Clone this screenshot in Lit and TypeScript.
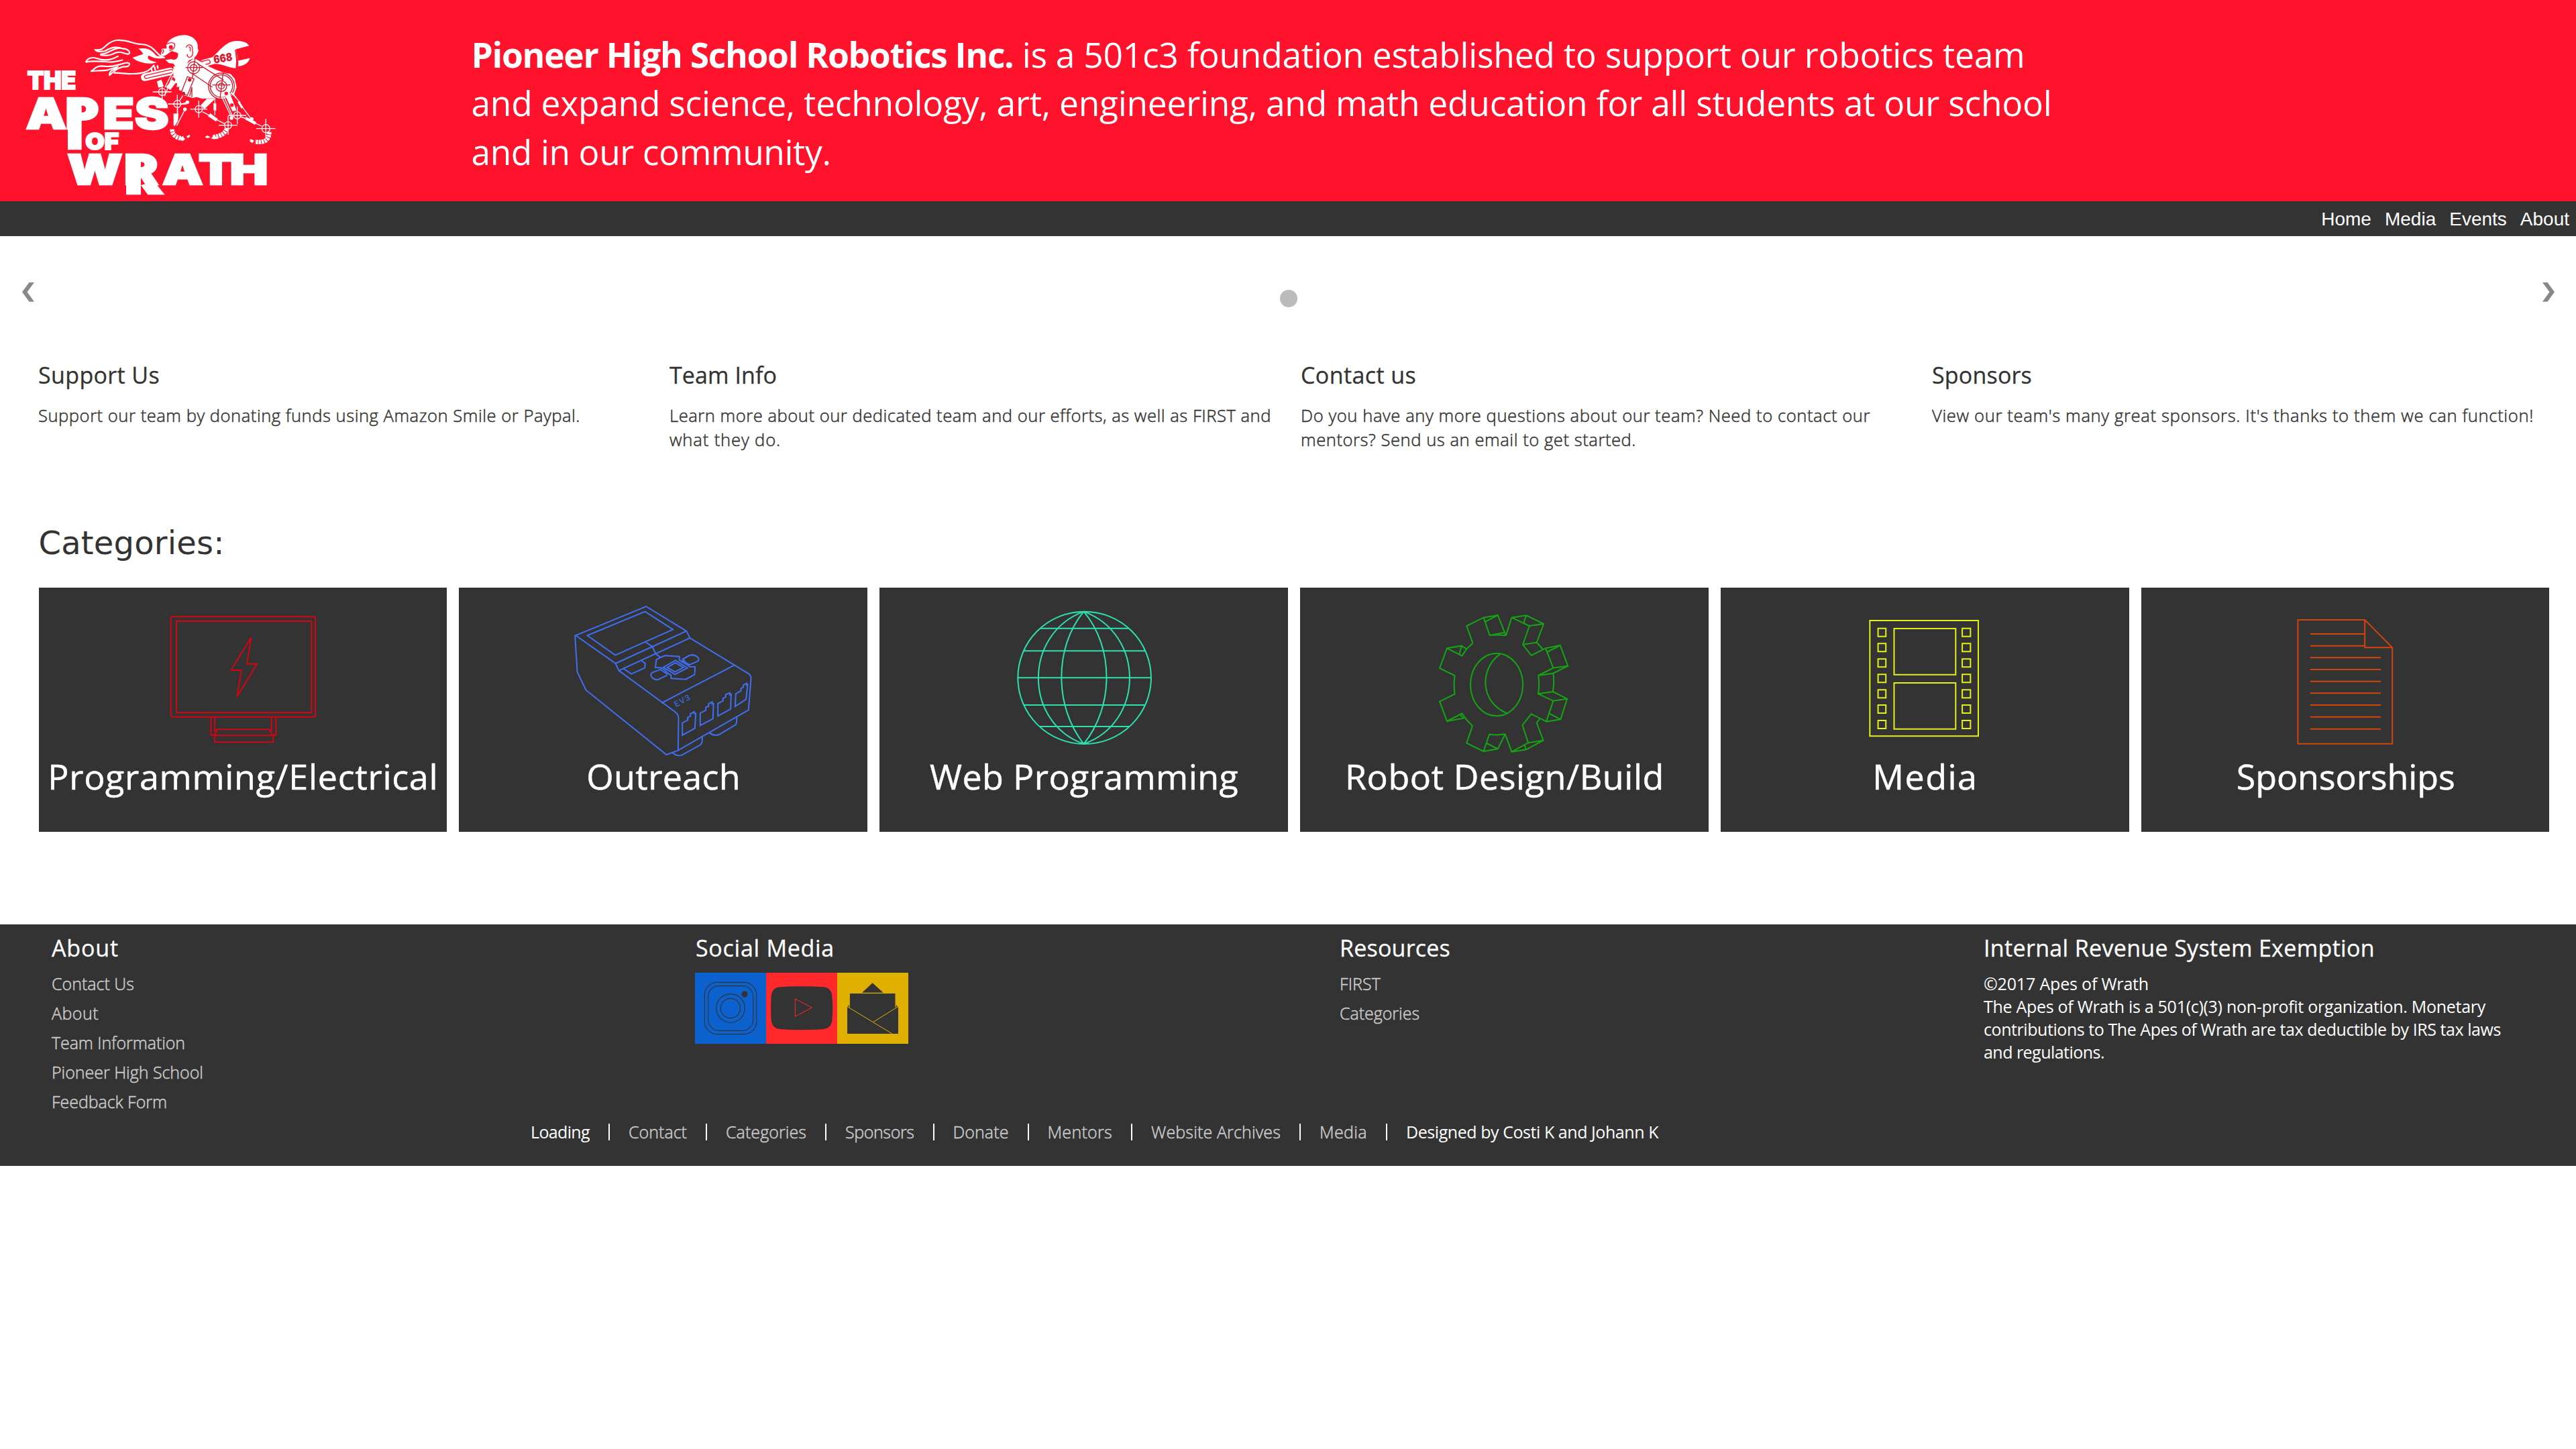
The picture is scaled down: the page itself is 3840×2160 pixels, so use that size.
import { LitElement, html, css, svg } from "lit";
import { customElement, property } from "lit/decorators.js";

/** One line of text whose tracking is adjusted to span the given width. */
@customElement("fit-text")
class FitText extends LitElement {
  @property({ type: Number }) w = 0;
  @property() text = "";

  static styles = css`
    :host { display: block; white-space: pre; }
    .run { display: inline-block; }
  `;

  render() {
    return html`<span class="run">${this.text}</span>`;
  }

  updated() {
    const run = this.renderRoot.querySelector(".run") as HTMLElement;
    this.style.width = `${this.w}px`;
    run.style.letterSpacing = "0";
    const natural = run.getBoundingClientRect().width;
    run.style.letterSpacing = `${(this.w - natural) / this.text.length}px`;
  }
}

type Line = [string, number];

const fit = ([text, w]: Line) => html`<fit-text .text=${text} .w=${w}></fit-text>`;

const features: { title: Line; lines: Line[] }[] = [
  { title: ["Support Us", 181], lines: [["Support our team by donating funds using Amazon Smile or Paypal.", 808]] },
  {
    title: ["Team Info", 160],
    lines: [["Learn more about our dedicated team and our efforts, as well as FIRST and", 897], ["what they do.", 166]],
  },
  {
    title: ["Contact us", 172],
    lines: [["Do you have any more questions about our team? Need to contact our", 849], ["mentors? Send us an email to get started.", 500]],
  },
  { title: ["Sponsors", 149], lines: [["View our team's many great sponsors. It's thanks to them we can function!", 897]] },
];

const monitorIcon = svg`
  <g class="line" stroke="#d40511" transform="translate(200 880) scale(.33333)">
    <rect x="163" y="118" width="646" height="448" rx="9"/>
    <rect x="188" y="138" width="604" height="409"/>
    <path d="M522 210 L432 357 H478 L459 476 L548 329 H503 Z"/>
    <path d="M342 567 V647 H359 M359 567 V628 H365 M613 567 V628 H606 M633 567 V647 H620"/>
    <path d="M359 649 L369 622 H601 L620 649 M359 649 H621 V679 H359 Z"/>
  </g>`;

const brickIcon = svg`
  <g class="line" stroke="#3f6ff0" transform="translate(840 880) scale(.33333)">
    <path d="M368 72 L548 182 L564 213 L828 374 Q838 382 837 395 L826 535 L511 716 L459 735 L99 446 L60 365 L50 203 Z"/>
    <path d="M52 201 L231 327 L246 359 L500 545 Q513 556 513 574 L511 716"/>
    <path d="M363 95 L488 175 L230 290 L105 202 Z"/>
    <path d="M231 327 L548 182 M246 359 L564 213 M437 504 L762 335"/>
    <path d="M364 231 L396 252 L411 284 L432 300"/>
    <path d="M348 315 L364 327 L362 347 L302 374 L268 351"/>
    <path d="M432 300 L453 292 L517 296 L516 311 L529 320 L541 311 M432 300 L414 310 L409 346 H434 L452 357 M529 309 L562 291 C585 284 615 302 598 318 L562 333 L529 312 M554 334 L562 341 L587 342 L585 377 L545 398 L480 394 L479 379 L463 370"/>
    <path d="M463 379 L425 398 C400 405 378 379 396 367 L432 354 L463 375"/>
    <path d="M499 313 L553 347 L497 376 L445 344 Z M499 324 L535 345 L497 365 L463 345 Z M529 320 L554 334 M452 357 L463 370"/>
    <path d="M530 648 V592 L554 581 V568 L566 563 V552 L583 543 V551 L590 550 L586 617 Z"/>
    <path d="M610 604 V549 L635 536 V523 L647 519 V508 L663 499 V508 L669 506 L667 574 Z"/>
    <path d="M689 562 V506 L712 494 V483 L724 477 V466 L742 458 V467 L748 465 L746 531 Z"/>
    <path d="M766 519 L769 462 L792 450 V439 L803 433 V423 L818 415 V423 L822 422 L815 487 Z"/>
    <path d="M486 726 Q505 744 528 737 L612 690 Q620 683 619 655 M651 637 Q672 653 694 645 L768 601 Q774 595 773 567"/>
    <text class="brick-name" transform="translate(502 523) rotate(-29)" fill="#3f6ff0" stroke="none" textLength="76">EV3</text>
  </g>`;

const globeIcon = svg`
  <g class="line" stroke="#2de0ae" transform="translate(1480 880) scale(.57398 .33333)">
    <ellipse cx="237" cy="391" rx="173" ry="296"/>
    <path d="M122 170 H352 M80 271 H394 M64 391 H410 M80 513 H394 M120 609 H353"/>
    <path d="M235 95 C78 195 78 590 235 687 C394 590 394 195 235 95 C158 255 158 520 235 687 C314 520 314 255 235 95"/>
  </g>`;

const gearIcon = svg`
  <g class="line" stroke="#14a514" transform="translate(1480 880) scale(.57398 .33333)">
    <ellipse cx="1309" cy="422" rx="68" ry="140"/>
    <path d="M1317 286 C1265 350 1265 500 1335 549"/>
    <path d="M1247 236 L1231 159 L1275 122 L1312 111 L1333 202 M1275 122 L1291 201 Q1312 197 1333 202 M1291 201 L1330 189 M1312 111 L1280 140"/>
    <path d="M1333 202 L1348 122 L1386 112 L1431 150 L1413 233 L1430 265 M1348 122 L1394 159 L1377 243 L1399 291 L1436 259 L1474 246 L1494 338 L1456 371 M1394 159 L1431 150 M1386 112 L1379 146 M1377 243 L1413 233"/>
    <path d="M1436 259 L1456 347 L1494 338 M1474 246 L1440 276 M1456 347 L1417 381 L1456 371 Q1459 412 1455 453 L1417 463 Q1421 420 1417 381"/>
    <path d="M1417 463 L1456 494 L1438 587 L1399 553 L1376 603 L1391 682 L1348 722 L1331 643 M1455 453 L1492 485 L1475 577 L1438 587 M1456 494 L1492 485 M1475 577 L1445 550"/>
    <path d="M1421 575 L1413 592 L1430 671 L1391 682 M1430 671 L1386 712 L1348 722 M1386 712 L1381 692"/>
    <path d="M1331 643 Q1311 649 1290 644 L1275 720 L1231 683 L1246 607 Q1231 582 1219 551 L1180 585 L1161 497 L1200 464 Q1197 420 1200 381 L1161 348 L1180 259 L1219 293 L1231 262 L1247 236"/>
    <path d="M1331 643 L1312 709 L1275 720 M1312 709 L1283 684 M1180 585 L1223 572 L1214 556 M1180 259 L1218 248 L1231 262 M1218 248 L1212 286"/>
  </g>`;

const holes = [199, 267, 336, 405, 474, 542, 611];
const filmIcon = svg`
  <g class="line" stroke="#e4f01b" transform="translate(2700 870) scale(.61224 .33333)">
    <rect x="143" y="165" width="264" height="517"/>
    <rect x="202" y="201" width="150" height="206"/>
    <rect x="202" y="444" width="150" height="206"/>
    ${holes.map((y) => svg`<rect x="163" y=${y + 1} width="19" height="36"/><rect x="368" y=${y + 1} width="20" height="36"/>`)}
  </g>`;

const rules = [331, 384, 437, 490, 543, 596, 650];
const paperIcon = svg`
  <g class="line" stroke="#d1440c" transform="translate(2700 870) scale(.61224 .33333)">
    <path d="M1185 162 H1348 L1415 286 V716 H1185 Z M1348 162 V286 H1415"/>
    <path d="M1215 225 H1347 M1215 278 H1347"/>
    ${rules.map((y) => svg`<path d="M1215 ${y} H1387"/>`)}
  </g>`;

const cards: { label: Line; icon: unknown; x: number }[] = [
  { label: ["Programming/Electrical", 582], icon: monitorIcon, x: 57.6 },
  { label: ["Outreach", 230], icon: brickIcon, x: 684.5 },
  { label: ["Web Programming", 460], icon: globeIcon, x: 1311.4 },
  { label: ["Robot Design/Build", 476], icon: gearIcon, x: 1938.3 },
  { label: ["Media", 157], icon: filmIcon, x: 2565.2 },
  { label: ["Sponsorships", 326], icon: paperIcon, x: 3192.1 },
];

const aboutLinks: Line[] = [
  ["Contact Us", 123], ["About", 70], ["Team Information", 199], ["Pioneer High School", 226], ["Feedback Form", 172],
];
const resourceLinks: Line[] = [["FIRST", 61], ["Categories", 119]];
const exemption: Line[] = [
  ["©2017 Apes of Wrath", 246],
  ["The Apes of Wrath is a 501(c)(3) non-profit organization. Monetary", 748],
  ["contributions to The Apes of Wrath are tax deductible by IRS tax laws", 771],
  ["and regulations.", 180],
];
const bottomLinks: Line[] = [
  ["Loading", 88], ["Contact", 87], ["Categories", 120], ["Sponsors", 102.5], ["Donate", 83],
  ["Mentors", 96.5], ["Website Archives", 193], ["Media", 71], ["Designed by Costi K and Johann K", 376],
];

const target = (x: number, y: number, r: number, arm: number, color: string) => svg`
  <g fill="none" stroke=${color} stroke-width="4">
    <circle cx=${x} cy=${y} r=${r}/>
    <path d="M${x - arm} ${y} H${x + arm} M${x} ${y - arm} V${y + arm}"/>
  </g>`;

const logo = svg`
  <g class="word" fill="#fff" stroke="#fff">
    <text x="122" y="309" font-size="109" textLength="218" lengthAdjust="spacingAndGlyphs" stroke-width="6">THE</text>
    <text transform="scale(1.2 1)" x="96 243 383 502" y="485" font-size="191" stroke-width="7">APES</text>
    <text x="382" y="580" font-size="104" textLength="150" lengthAdjust="spacingAndGlyphs" stroke-width="6">OF</text>
    <text transform="scale(1.22 1)" x="247 455 596 728 843" y="736" font-size="186" stroke-width="8">WRATH</text>
  </g>
  <path fill="#fff" d="M303 346 H365 V580 H303 Z M564 598 H630 V781 H564 Z M630 738 L690 722 L737 781 H661 Z"/>
  <g fill="none" stroke="#fff" stroke-width="6.5" stroke-linejoin="round">
    <path d="M738 168 C700 165 695 112 635 108 C590 108 575 85 520 90 C465 100 475 140 425 132 C435 145 455 140 470 138 C500 118 525 118 550 128 C570 125 590 148 573 152 C545 150 550 138 520 145 C500 152 495 162 448 156"/>
    <path d="M448 152 C480 155 500 125 540 124"/>
    <path d="M383 188 C395 165 415 165 435 172 C470 185 500 178 530 160 M383 188 C410 180 440 185 470 186 C500 190 520 185 550 178"/>
    <path d="M406 229 C425 220 425 205 455 205 C500 212 525 200 560 192 C590 185 580 210 560 208 C530 208 500 235 490 247 C488 230 500 222 525 215"/>
    <path d="M406 229 C430 225 450 228 478 224 C495 220 510 212 530 208 M508 236 C540 234 560 242 590 240 C650 240 670 225 690 200"/>
  </g>
  <path fill="#fff" d="M592 168 C615 160 635 155 640 150 C632 138 625 130 618 128 C660 120 680 135 700 160 L738 168 C715 175 690 172 665 158 C655 172 665 180 700 188 C680 200 625 195 592 168 Z"/>
  <g transform="rotate(-13 640 255)">
    <rect x="630" y="240" width="150" height="34" rx="17" fill="#fff"/>
    <rect x="646" y="250" width="130" height="14" rx="7" fill="none" stroke="#ff122b" stroke-width="4"/>
  </g>
  <path fill="none" stroke="#fff" stroke-width="7" d="M676 214 L681 234 M690 206 L695 226 M704 202 L706 218"/>
  <path fill="#fff" d="M898 180 L950 166 C980 140 1010 92 1060 93 C1090 92 1110 104 1114 115 L1056 130 L1064 178 L1118 166 C1116 190 1090 206 1064 207 L1066 190 L1058 160 L1054 215 C1020 215 1000 195 960 196 L920 207 Z"/>
  <path stroke="#ff122b" stroke-width="6" fill="none" d="M1054 132 L1062 206 M1058 180 L1120 166"/>
  <rect x="890" y="182" width="50" height="17" rx="8" transform="rotate(-13 915 190)" fill="none" stroke="#ff122b" stroke-width="4"/>
  <text x="958" y="194" class="word" font-size="50" textLength="84" lengthAdjust="spacingAndGlyphs" fill="#d31a2d" transform="rotate(-9 958 194)">668</text>
  <path fill="#fff" d="M776 208 L800 200 L835 195 L868 170 L905 190 L935 208 L966 222 L1000 235 L1030 240 L1050 262 L1058 300 L1048 330 L1010 350 L985 352 L960 350 L930 350 L905 352 L880 344 L860 348 L835 340 L812 334 L815 318 L800 312 L802 298 L790 300 L792 282 L780 280 L784 264 L775 255 Z"/>
  <path fill="#fff" d="M745 108 C755 85 790 65 830 67 C870 72 888 100 884 125 L888 136 C882 155 876 162 868 170 L845 180 L832 200 L815 198 L806 208 L796 202 L785 208 L775 194 L755 192 L740 178 L765 174 C785 180 798 170 796 150 L770 138 C760 140 752 152 738 158 C725 165 718 158 720 148 L725 136 C718 132 724 124 742 128 C748 124 742 116 745 108 Z"/>
  <path fill="#ff122b" d="M795 148 C780 138 765 142 755 153 C742 160 742 164 755 166 L738 176 L768 174 C785 182 797 172 795 148 Z"/>
  <path fill="none" stroke="#ff122b" stroke-width="4" d="M745 108 C755 102 775 95 781 108 C784 122 775 134 757 135 M832 122 C838 108 856 106 860 122 C858 130 868 148 858 160 C848 172 835 165 838 152 M844 120 C852 118 852 130 850 140 M728 130 L732 140 L725 150"/>
  <circle cx="764" cy="121" r="9" fill="#ff122b"/>
  <g fill="none" stroke="#d31a2d" stroke-width="4">
    <circle cx="866" cy="213" r="27"/><circle cx="866" cy="213" r="15"/>
    <path d="M830 212 H908 M872 170 L860 262 M882 194 L1000 268 M852 234 L950 300"/>
    <circle cx="990" cy="295" r="58"/><circle cx="990" cy="295" r="50"/><circle cx="990" cy="295" r="24"/><circle cx="990" cy="295" r="13"/>
    <path d="M950 290 H1030 M998 235 L984 350"/>
    <path d="M838 253 L868 262 L838 336 L808 330 Z M858 300 V345 M848 340 L858 302"/>
  </g>
  <circle cx="848" cy="267" r="8" fill="#d31a2d"/><circle cx="820" cy="328" r="8" fill="#d31a2d"/>
  <g fill="#fff">
    <path d="M702 274 L722 266 L732 296 L708 302 Z M770 266 L788 278 L762 312 L742 300 Z"/>
    <path d="M776 418 H798 L796 450 L782 474 L776 470 Z M940 416 L974 442 L966 454 L930 430 Z"/>
    <path d="M955 372 H967 V404 H955 Z M1070 362 L1088 390 L1080 396 L1062 366 Z M1100 432 L1146 456 L1140 468 L1096 444 Z"/>
    <path d="M925 352 L962 352 L914 398 L898 380 Z M1004 330 L1026 322 L1058 404 L1040 408 Z"/>
    <circle cx="838" cy="367" r="8"/><circle cx="827" cy="399" r="8"/><circle cx="1035" cy="438" r="8"/><circle cx="1126" cy="442" r="8"/>
  </g>
  <circle cx="1037" cy="380" r="8" fill="#ff122b"/><circle cx="1012" cy="328" r="8" fill="#ff122b"/>
  <g fill="none" stroke="#fff" stroke-width="4">
    <path d="M778 220 L738 300 M736 340 L772 250 M794 390 V420 M826 402 L790 472 M818 338 L802 362 M806 378 L834 368 M905 410 L945 430 M970 446 L1005 464"/>
    <path d="M961 352 V425 M990 340 L1034 432 M1000 340 L1042 434 M1034 324 L1074 368 M1086 392 L1122 440 M1040 326 L1060 352 M1076 432 L1104 442 M1140 460 L1170 474"/>
  </g>
  ${target(725, 321, 16, 42, "#fff")}
  ${target(793, 375, 16, 42, "#fff")}
  ${target(889, 398, 16, 38, "#fff")}
  ${target(1020, 470, 16, 42, "#fff")}
  ${target(1061, 426, 16, 40, "#fff")}
  ${target(1189, 485, 18, 43, "#fff")}
  <g fill="none" stroke="#fff" stroke-width="20" stroke-dasharray="10 3">
    <path d="M770 488 C770 515 790 528 820 530"/>
    <path d="M1014 486 C1005 508 990 518 950 524"/>
    <path d="M1204 500 C1204 535 1185 550 1140 544"/>
  </g>
  <path fill="#fff" d="M802 532 L816 520 L828 532 L818 540 Z M834 520 L848 512 L850 520 L840 528 Z M916 522 L928 516 L942 524 L926 528 Z M944 530 L958 512 L974 532 Z M1118 532 L1136 538 L1130 550 L1118 544 Z"/>
`;

@customElement("app-root")
class AppRoot extends LitElement {
  static styles = css`
    :host {
      display: block;
      background: #fff;
      color: #333;
      font-family: "Open Sans", "Noto Sans", sans-serif;
    }
    svg { display: block; overflow: visible; }
    h1, h2, h3, p, ul { margin: 0; padding: 0; font-weight: 400; list-style: none; }
    .word { font-family: Inter, "Open Sans", sans-serif; font-weight: 900; stroke-linejoin: miter; }

    .banner {
      display: flex;
      box-sizing: border-box;
      height: 300px;
      background: #ff122b;
      color: #fff;
    }
    .logo { width: 460px; height: 270px; margin-top: 30px; flex: none; }
    .mission { padding: 44.5px 0 0 242.5px; font-size: 51.5px; line-height: 72.6px; }
    .mission-row { display: flex; }
    .strong { font-weight: 700; }

    .nav {
      display: flex;
      justify-content: flex-end;
      align-items: center;
      gap: 20px;
      height: 52px;
      padding-right: 10px;
      background: #333;
      color: #fff;
      font-family: "Liberation Sans", Arial, sans-serif;
      font-size: 28px;
      line-height: 53px;
    }

    .carousel {
      display: flex;
      justify-content: space-between;
      height: 114.5px;
      padding: 69px 32px 0 33px;
    }
    .dot { width: 26px; height: 26px; margin-top: 11px; border-radius: 50%; background: #bbb; }

    .features { display: grid; grid-template-columns: repeat(4, 1fr); height: 243.5px; padding: 0 19px 0 57px; }
    .feature-title { font-size: 34px; line-height: 46px; margin-bottom: 20.5px; -webkit-text-stroke: 0.3px; }
    .feature-body { font-size: 25.6px; line-height: 36px; font-weight: 300; -webkit-text-stroke: 0.5px; }

    .section-title {
      height: 97px;
      padding-left: 57.5px;
      font-family: Verdana, "DejaVu Sans", sans-serif;
      font-size: 48px;
      line-height: 60px;
    }
    .cards { display: grid; grid-template-columns: repeat(6, 1fr); gap: 18.6px; padding: 0 39.6px 0 57.6px; }
    .card {
      display: flex;
      flex-direction: column;
      align-items: center;
      height: 363.5px;
      background: #333;
      color: #fff;
      font-size: 52px;
      line-height: 70px;
    }
    .card > fit-text { margin-left: 1px; -webkit-text-stroke: 0.5px; }
    .art { width: 608px; height: 245.5px; }
    .line { fill: none; stroke-width: 2px; }
    .line > * { vector-effect: non-scaling-stroke; }
    .brick-name { font-family: "Liberation Mono", monospace; font-size: 38px; }

    .footer { box-sizing: border-box; height: 360px; margin-top: 138.5px; background: #333; color: #fff; }
    .footer-cols { display: grid; grid-template-columns: repeat(4, 960px); height: 291.5px; padding-left: 76px; box-sizing: border-box; }
    .footer-title { font-size: 34px; line-height: 46px; padding: 11.5px 0 0 1px; -webkit-text-stroke: 0.3px; }
    .links { padding: 8.5px 0 0 1px; font-size: 25px; line-height: 44px; font-weight: 300; color: #ccc; -webkit-text-stroke: 0.5px; }
    .legal { padding: 13.5px 0 0 1px; font-size: 25px; line-height: 34px; }
    .social { display: flex; padding-top: 14.5px; }
    .tile { width: 106px; height: 106px; overflow: hidden; }
    .bottom { display: flex; align-items: center; padding-left: 791px; font-size: 25px; line-height: 35px; }
    .bottom-item { display: flex; align-items: center; font-weight: 300; color: #ccc; -webkit-text-stroke: 0.5px; }
    .bottom-item + .bottom-item::before { content: ""; width: 2px; height: 25px; margin: 0 28px; background: #fff; }
    .bottom-item:first-child, .bottom-item:last-child { color: #fff; font-weight: 400; -webkit-text-stroke: 0; }
  `;

  render() {
    return html`
      <header class="banner">
        <svg class="logo" viewBox="0 0 1380 810">${logo}</svg>
        <div class="mission">
          <div class="mission-row">
            <span class="strong">${fit(["Pioneer High School Robotics Inc.", 808])}</span>
            ${fit([" is a 501c3 foundation established to support our robotics team", 1508])}
          </div>
          ${fit(["and expand science, technology, art, engineering, and math education for all students at our school", 2356])}
          ${fit(["and in our community.", 536])}
        </div>
      </header>
      <nav class="nav"><span>Home</span><span>Media</span><span>Events</span><span>About</span></nav>

      <section class="carousel">
        <svg width="18" height="29" viewBox="0 0 18 29"><path fill="#888" d="M18 0 H10.5 L0 14.3 L10.5 28.7 H18 L7.5 14.3 Z"/></svg>
        <span class="dot"></span>
        <svg width="18" height="29" viewBox="0 0 18 29"><path fill="#888" d="M0 0 H7.5 L18 14.3 L7.5 28.7 H0 L10.5 14.3 Z"/></svg>
      </section>

      <section class="features">
        ${features.map(
          (f) => html`<article>
            <h3 class="feature-title">${fit(f.title)}</h3>
            <div class="feature-body">${f.lines.map(fit)}</div>
          </article>`
        )}
      </section>

      <h2 class="section-title">${fit(["Categories:", 277])}</h2>
      <section class="cards">
        ${cards.map(
          (c) => html`<article class="card">
            <svg class="art" viewBox="${c.x} 876 608 245.5">${c.icon}</svg>
            ${fit(c.label)}
          </article>`
        )}
      </section>

      <footer class="footer">
        <div class="footer-cols">
          <div>
            <h3 class="footer-title">${fit(["About", 100])}</h3>
            <div class="links">${aboutLinks.map(fit)}</div>
          </div>
          <div>
            <h3 class="footer-title">${fit(["Social Media", 207])}</h3>
            <div class="social">
              <svg class="tile" viewBox="18 180 318 318">
                <path fill="#0b62cf" d="M18 180 H336 V498 H18 Z"/>
                <g fill="none" stroke="#333" stroke-width="3.5">
                  <rect x="61" y="223" width="232" height="232" rx="56"/>
                  <rect x="77" y="239" width="201" height="200" rx="48"/>
                  <circle cx="177" cy="339" r="64"/><circle cx="177" cy="339" r="44"/>
                </g>
                <circle cx="240" cy="276" r="14" fill="#333"/>
              </svg>
              <svg class="tile" viewBox="336 180 318 318">
                <path fill="#ff282a" d="M336 180 H654 V498 H336 Z"/>
                <path fill="#333" d="M400 244 Q495 238 590 244 Q628 246 631 285 Q636 339 631 392 Q628 430 590 433 Q495 439 400 433 Q362 430 359 392 Q356 339 359 285 Q362 246 400 244 Z"/>
                <path fill="none" stroke="#ff282a" stroke-width="3" d="M466 297 L541 336 L466 376 Z"/>
              </svg>
              <svg class="tile" viewBox="654 180 318 318">
                <path fill="#e0b000" d="M654 180 H972 V498 H654 Z"/>
                <path fill="#333" d="M812 226 L860 269 H765 Z M709 273 H915 V334 H927 V453 H699 V334 H709 Z M707 322 V334 H700 Z M917 322 V334 H925 Z"/>
                <path fill="none" stroke="#e0b000" stroke-width="3" d="M700 332 L900 453 M926 332 L814 401 M709 334 V273 M915 334 V273"/>
              </svg>
            </div>
          </div>
          <div>
            <h3 class="footer-title">${fit(["Resources", 165])}</h3>
            <div class="links">${resourceLinks.map(fit)}</div>
          </div>
          <div>
            <h3 class="footer-title">${fit(["Internal Revenue System Exemption", 583])}</h3>
            <div class="legal">${exemption.map(fit)}</div>
          </div>
        </div>
        <div class="bottom">${bottomLinks.map((l) => html`<div class="bottom-item">${fit(l)}</div>`)}</div>
      </footer>
    `;
  }
}
